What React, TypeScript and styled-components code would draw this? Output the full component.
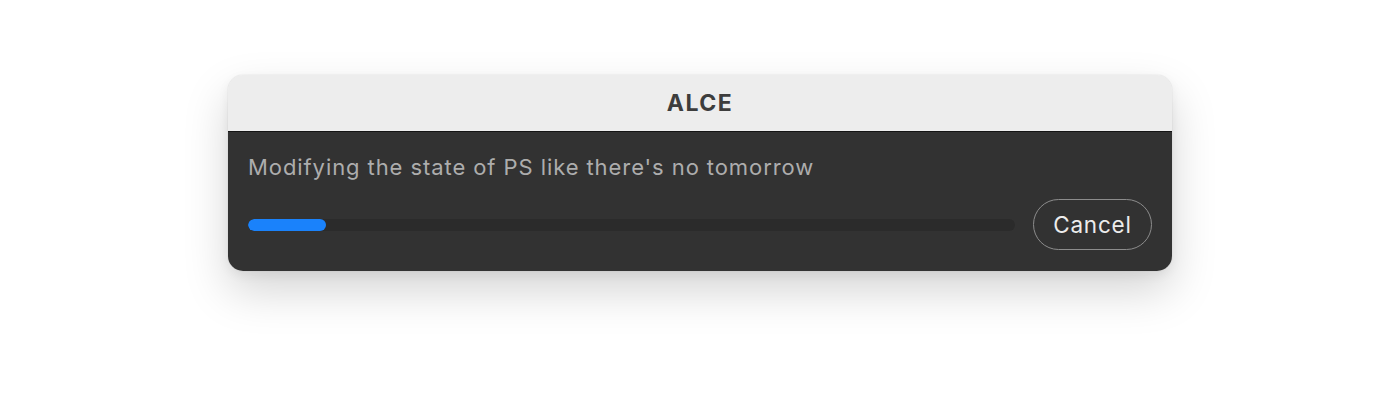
import React from "react";
import styled, { createGlobalStyle } from "styled-components";

const Global = createGlobalStyle`
  html, body { margin: 0; padding: 0; background: #ffffff; }
  body { font-family: Inter, "Liberation Sans", Arial, sans-serif; -webkit-font-smoothing: antialiased; }
`;

const Page = styled.div`
  width: 1400px;
  height: 420px;
  padding-top: 75px;
  padding-left: 228px;
  box-sizing: border-box;
`;

const Window = styled.div`
  width: 944px;
  border-radius: 15px;
  overflow: hidden;
  box-shadow: 0 0 1px rgba(0, 0, 0, 0.25), 0 20px 45px rgba(0, 0, 0, 0.17), 0 4px 12px rgba(0, 0, 0, 0.06);
  display: flex;
  flex-direction: column;
`;

const TitleBar = styled.div`
  height: 56px;
  background: #ededed;
  border-bottom: 1.5px solid #141414;
  display: flex;
  align-items: center;
  justify-content: center;
  font-size: 23px;
  font-weight: 700;
  color: #3d3d3d;
  letter-spacing: 1.5px;
`;

const Body = styled.div`
  background: #323232;
  padding: 21px 20px 21px 20px;
  display: flex;
  flex-direction: column;
  gap: 18px;
`;

const Message = styled.div`
  font-size: 22px;
  color: #adadad;
  line-height: 28px;
  letter-spacing: 0.92px;
`;

const Row = styled.div`
  display: flex;
  align-items: center;
  gap: 18px;
`;

const Track = styled.div`
  flex: 1;
  height: 12px;
  border-radius: 6px;
  background: #2b2b2b;
  overflow: hidden;
`;

const Fill = styled.div`
  height: 100%;
  border-radius: 6px;
  background: #1a82fb;
`;

const CancelButton = styled.button`
  height: 51px;
  width: 119px;
  border-radius: 26px;
  border: 1.5px solid #8c8c8c;
  background: transparent;
  color: #ececec;
  font-family: inherit;
  font-size: 22.5px;
  letter-spacing: 0.8px;
  padding: 0;
  cursor: pointer;
`;

export default function App() {
  const progress = 78;
  return (
    <>
      <Global />
      <Page>
        <Window>
          <TitleBar>ALCE</TitleBar>
          <Body>
            <Message>Modifying the state of PS like there's no tomorrow</Message>
            <Row>
              <Track>
                <Fill style={{ width: `${progress}px` }} />
              </Track>
              <CancelButton>Cancel</CancelButton>
            </Row>
          </Body>
        </Window>
      </Page>
    </>
  );
}
